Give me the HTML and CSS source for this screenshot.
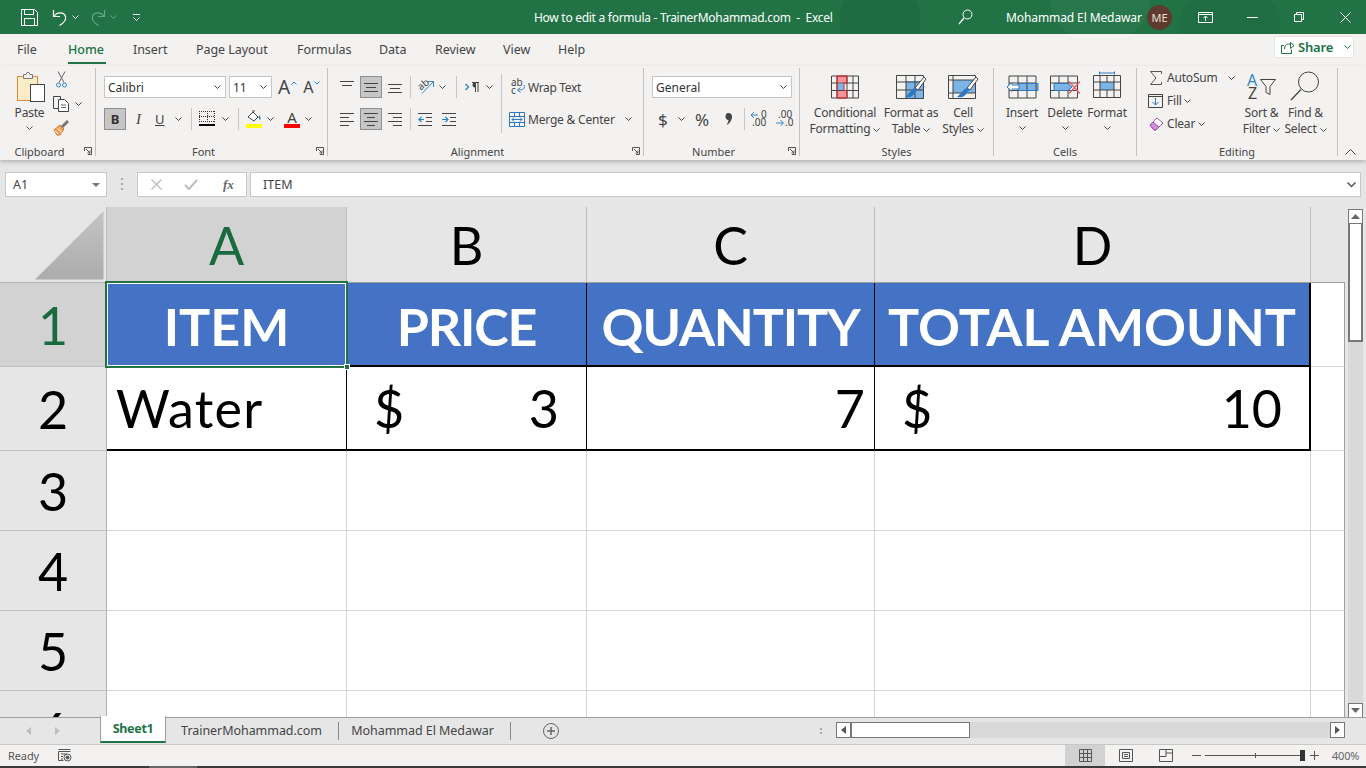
FILE: index.html
```html
<!DOCTYPE html>
<html lang="en">
<head>
<meta charset="utf-8">
<title>How to edit a formula - TrainerMohammad.com - Excel</title>
<link rel="stylesheet" href="styles.css">
</head>
<body>
<div class="app">
  <header class="titlebar">
    <svg class="m21" width="17" height="17" viewBox="0 0 17 17" fill="none" stroke="#fff"><path d="M.5.500h13l3 3v13H.5z"/><path d="M3.500.500v5h9v-5M3.500 16.500v-7h10v7"/></svg>
    <svg class="m13" width="17" height="17" viewBox="0 0 17 17" fill="none" stroke="#fff" stroke-width="1.200"><path d="M2.500 1v6.500H9"/><path d="M3 7.500C6 2.500 13 3 14.500 7.500 15.500 12 12 14.500 8.500 16.500"/></svg>
    <svg class="m4" width="7" height="4" viewBox="0 0 7 4" fill="none" stroke="#fff"><path d="M.5.500l3 3 3-3"/></svg>
    <svg class="m11" width="17" height="17" viewBox="0 0 17 17" fill="none" stroke="#6aa685" stroke-width="1.200"><path d="M14.500 1v6.500H8"/><path d="M14 7.500C11 2.500 4 3 2.500 7.500 1.500 12 5 14.500 8.500 16.500"/></svg>
    <svg class="m3" width="7" height="4" viewBox="0 0 7 4" fill="none" stroke="#6aa685"><path d="M.5.500l3 3 3-3"/></svg>
    <svg class="m16" width="7" height="7" viewBox="0 0 7 7" fill="none" stroke="#fff"><path d="M0 .5h7M.5 3.500l3 3 3-3"/></svg>
    <div class="doc-title">How to edit a formula - TrainerMohammad.com &nbsp;- &nbsp;Excel</div>
    <svg width="15" height="16" viewBox="0 0 15 16" fill="none" stroke="#fff"><circle cx="9.500" cy="5.500" r="4.500"/><path d="M6 9l-5 6" stroke-width="1.300"/></svg>
    <div class="user">Mohammad El Medawar</div>
    <div class="avatar">ME</div>
    <svg class="m26" width="15" height="11" viewBox="0 0 15 11" fill="none" stroke="#fff"><path d="M.5.500h14v10H.5zM.5 2.500h14M7.500 9V4.500M5.500 6l2-2 2 2"/></svg>
    <svg class="m34" width="11" height="1" viewBox="0 0 11 1"><rect width="11" height="1" fill="#fff"/></svg>
    <svg class="m36" width="10" height="10" viewBox="0 0 10 10" fill="none" stroke="#fff"><path d="M.5 2.500h7v7h-7zM2.500 2.500v-2h7v7h-2"/></svg>
    <svg class="m36" width="11" height="11" viewBox="0 0 11 11" fill="none" stroke="#fff"><path d="M.5.500l10 10M10.500.500l-10 10"/></svg>
  </header>

  <nav class="tabs">
    <span class="tab t-file">File</span>
    <span class="tab t-home active">Home</span>
    <span class="tab t-insert">Insert</span>
    <span class="tab t-page">Page Layout</span>
    <span class="tab t-formulas">Formulas</span>
    <span class="tab t-data">Data</span>
    <span class="tab t-review">Review</span>
    <span class="tab t-view">View</span>
    <span class="tab">Help</span>
    <div class="share">
      <svg width="14" height="13" viewBox="0 0 14 13" fill="none" stroke="#217346"><path d="M9.500 1.500l3.500 3-3.500 3zM9.500 3H7.500C5 3 3.500 5 3.500 8M10.500 8.500v4H.5V4.500H3"/></svg>
      <span class="share-t">Share</span>
      <svg class="m11" width="7" height="4" viewBox="0 0 7 4" fill="none" stroke="#217346"><path d="M.5.500l3 3 3-3"/></svg>
    </div>
  </nav>

  <section class="ribbon">
    <!-- Clipboard -->
    <div class="group g-clip">
      <div class="g-body clip-body">
        <div class="paste">
          <svg width="29" height="30" viewBox="0 0 29 30"><rect x=".5" y="4.500" width="20" height="24" fill="#fcecc8" stroke="#e0893a"/><path d="M6.500 4.500V2.500h2.500l1-2h2l1 2h2.500v4h-9z" fill="#f3f2f1" stroke="#777"/><rect x="13.500" y="12.500" width="14" height="17" fill="#fff" stroke="#444"/></svg>
          <span class="lbl paste-t">Paste</span>
          <svg class="caret-c" width="7" height="4" viewBox="0 0 7 4" fill="none" stroke="#555"><path d="M.5.500l3 3 3-3"/></svg>
        </div>
        <div class="clip-small">
          <svg class="cut" width="11" height="17" viewBox="0 0 11 17" fill="none"><path d="M2 .5l6 11M9 .5l-6 11" stroke="#666"/><circle cx="2.500" cy="14" r="2" stroke="#2e86c8"/><circle cx="8.500" cy="14" r="2" stroke="#2e86c8"/></svg>
          <div class="row copy">
            <svg width="17" height="16" viewBox="0 0 17 16" fill="#f3f2f1" stroke="#444"><path d="M.5.500h7v12h-7z"/><path d="M5.500 3.500h6l4 4v8h-10z" fill="#fff"/><path d="M8 9h5M8 11.500h5" stroke="#666"/></svg>
            <svg class="m5" width="7" height="4" viewBox="0 0 7 4" fill="none" stroke="#444"><path d="M.5.500l3 3 3-3"/></svg>
          </div>
          <svg class="brush" width="17" height="17" viewBox="0 0 17 17"><path d="M1 11l6-5 4 4-4 6H4z" fill="#f0a35a" stroke="#d9782a"/><path d="M8 7l6-6 2 2-6 6z" fill="#777"/><path d="M2 12l3 3M5 9.500l4 4" stroke="#fff"/></svg>
        </div>
      </div>
      <div class="g-foot"><span class="g-label">Clipboard</span><svg class="launch" width="8" height="8" viewBox="0 0 8 8" fill="none" stroke="#555"><path d="M.5 4V.5H7.500v7H4M2 2l4 4M6 3.500V6H3.500"/></svg></div>
    </div>

    <!-- Font -->
    <div class="group g-font">
      <div class="g-body stack">
        <div class="row r22">
          <div class="select w-font"><span>Calibri</span><svg width="7" height="4" viewBox="0 0 7 4" fill="none" stroke="#444"><path d="M.5.500l3 3 3-3"/></svg></div>
          <div class="select w-size m3"><span>11</span><svg width="7" height="4" viewBox="0 0 7 4" fill="none" stroke="#444"><path d="M.5.500l3 3 3-3"/></svg></div>
          <span class="glyph-a big m6">A</span><svg class="up" width="6" height="4" viewBox="0 0 6 4" fill="none" stroke="#2e86c8"><path d="M.5 3.500L3 1l2.500 2.500"/></svg>
          <span class="glyph-a small m6">A</span><svg class="up" width="6" height="4" viewBox="0 0 6 4" fill="none" stroke="#2e86c8"><path d="M.5.500L3 3 5.500.500"/></svg>
        </div>
        <div class="row r22">
          <div class="press bold-b">B</div>
          <span class="ital m10">I</span>
          <span class="under m13">U</span>
          <svg class="m10" width="7" height="4" viewBox="0 0 7 4" fill="none" stroke="#444"><path d="M.5.500l3 3 3-3"/></svg>
          <i class="sep m9"></i>
          <svg class="m7" width="16" height="17" viewBox="0 0 16 17" fill="none"><path d="M0 .5h16M0 10.500h16M.5 0v11M15.500 0v11M8.500 0v11M0 5.500h16" stroke="#333" stroke-dasharray="1 1"/><rect y="13" width="16" height="2" fill="#000"/></svg>
          <svg class="m7" width="7" height="4" viewBox="0 0 7 4" fill="none" stroke="#444"><path d="M.5.500l3 3 3-3"/></svg>
          <i class="sep m9"></i>
          <svg class="m7" width="16" height="18" viewBox="0 0 16 18" fill="none"><path d="M2 7l5-5 5 5-4 4z" stroke="#444" fill="#fff"/><path d="M6 1l3 0" stroke="#444"/><path d="M13 5c2 2 2 4 1 5-1-1-2-3-1-5z" fill="#2e78c0"/><rect y="14" width="16" height="4" fill="#ffff00"/></svg>
          <svg class="m5" width="7" height="4" viewBox="0 0 7 4" fill="none" stroke="#444"><path d="M.5.500l3 3 3-3"/></svg>
          <div class="colora m10"><span>A</span><i></i></div>
          <svg class="m5" width="7" height="4" viewBox="0 0 7 4" fill="none" stroke="#444"><path d="M.5.500l3 3 3-3"/></svg>
        </div>
      </div>
      <div class="g-foot"><span class="g-label">Font</span><svg class="launch" width="8" height="8" viewBox="0 0 8 8" fill="none" stroke="#555"><path d="M.5 4V.5H7.500v7H4M2 2l4 4M6 3.500V6H3.500"/></svg></div>
    </div>

    <!-- Alignment -->
    <div class="group g-align">
      <div class="g-body align-body">
        <div class="stack align-left">
          <div class="row r22">
            <svg class="m12" width="14" height="14" viewBox="0 0 14 14" stroke="#444"><path d="M0 1.500h14M2 5.500h10"/></svg>
            <div class="press m6"><svg width="14" height="14" viewBox="0 0 14 14" stroke="#444"><path d="M0 3.500h14M2 7.500h10M0 11.500h14"/></svg></div>
            <svg class="m6" width="14" height="14" viewBox="0 0 14 14" stroke="#444"><path d="M2 8.500h10M0 12.500h14M0 4.500h14"/></svg>
            <i class="sep m8"></i>
            <svg class="m7" width="17" height="16" viewBox="0 0 17 16" fill="none"><text x="0" y="10" class="svg-t" transform="rotate(-40 4 7)">ab</text><path d="M4 14.500L15 3M10 2.500h5.500V8" stroke="#2e86c8"/></svg>
            <svg class="m4" width="7" height="4" viewBox="0 0 7 4" fill="none" stroke="#444"><path d="M.5.500l3 3 3-3"/></svg>
            <i class="sep m10"></i>
            <svg class="m8" width="15" height="12" viewBox="0 0 15 12" fill="none"><path d="M.5 3l3 3-3 3" stroke="#2e86c8" stroke-width="1.300"/><path d="M7 1.500h7M10.500 1.500V11M13 1.500V11" stroke="#444"/><path d="M10 1.500a2.500 2.500 0 000 5z" fill="#444"/></svg>
            <svg class="m6" width="7" height="4" viewBox="0 0 7 4" fill="none" stroke="#444"><path d="M.5.500l3 3 3-3"/></svg>
          </div>
          <div class="row r22">
            <svg class="m12" width="14" height="14" viewBox="0 0 14 14" stroke="#444"><path d="M0 1.500h14M0 5.500h9M0 9.500h14M0 13.500h9"/></svg>
            <div class="press m6"><svg width="14" height="14" viewBox="0 0 14 14" stroke="#444"><path d="M0 1.500h14M3 5.500h8M0 9.500h14M3 13.500h8"/></svg></div>
            <svg class="m6" width="14" height="14" viewBox="0 0 14 14" stroke="#444"><path d="M0 1.500h14M5 5.500h9M0 9.500h14M5 13.500h9"/></svg>
            <i class="sep m8"></i>
            <svg class="m7" width="14" height="13" viewBox="0 0 14 13" fill="none"><path d="M0 .5h14M0 12.500h14M8 4.500h6M8 8.500h6" stroke="#444"/><path d="M6 6.500H1M3.500 4l-2.500 2.500L3.500 9" stroke="#2e86c8" stroke-width="1.200"/></svg>
            <svg class="m10" width="14" height="13" viewBox="0 0 14 13" fill="none"><path d="M0 .5h14M0 12.500h14M8 4.500h6M8 8.500h6" stroke="#444"/><path d="M0 6.500h5M3.500 4L6 6.500 3.500 9" stroke="#2e86c8" stroke-width="1.200"/></svg>
          </div>
        </div>
        <i class="sep-tall"></i>
        <div class="stack">
          <div class="row r22">
            <svg class="m9" width="14" height="16" viewBox="0 0 14 16" fill="none"><text x="0" y="7" class="svg-t">ab</text><text x="0" y="15" class="svg-t">c</text><path d="M13 6c1 4-1 5-6 5M9.500 8.500L6.500 11l3 2.500" stroke="#2e86c8"/></svg>
            <span class="lbl m3 low wrap-t">Wrap Text</span>
          </div>
          <div class="row r22">
            <svg class="m7" width="16" height="15" viewBox="0 0 16 15" fill="none"><path d="M.5.500h15v14H.5zM.5 4.500h15M.5 10.500h15M5.500.5v4M10.500.5v4M5.500 10.500v4M10.500 10.500v4" stroke="#2e78c0"/><path d="M3 7.500h10M5 5.500l-2 2 2 2M11 5.500l2 2-2 2" stroke="#2e78c0"/></svg>
            <span class="lbl m3 low">Merge &amp; Center</span>
            <svg class="m10" width="7" height="4" viewBox="0 0 7 4" fill="none" stroke="#444"><path d="M.5.500l3 3 3-3"/></svg>
          </div>
        </div>
      </div>
      <div class="g-foot"><span class="g-label">Alignment</span><svg class="launch" width="8" height="8" viewBox="0 0 8 8" fill="none" stroke="#555"><path d="M.5 4V.5H7.500v7H4M2 2l4 4M6 3.500V6H3.500"/></svg></div>
    </div>

    <!-- Number -->
    <div class="group g-num">
      <div class="g-body stack">
        <div class="row r22"><div class="select w-num m8"><span>General</span><svg width="7" height="4" viewBox="0 0 7 4" fill="none" stroke="#444"><path d="M.5.500l3 3 3-3"/></svg></div></div>
        <div class="row r22">
          <span class="num-g dollar">$</span>
          <svg class="m10" width="7" height="4" viewBox="0 0 7 4" fill="none" stroke="#444"><path d="M.5.500l3 3 3-3"/></svg>
          <span class="num-g pct m10">%</span>
          <svg class="m13" width="8" height="14" viewBox="0 0 8 14"><path d="M2.500 1C5.500.5 7.500 2.500 7 5.500 6.500 9 4.500 11.500 1.500 13 3 10.500 3.500 9 3.500 8 1.500 8 .5 6.500.5 4.500.5 2.500 1.500 1.500 2.500 1z" fill="#444"/></svg>
          <i class="sep m11"></i>
          <svg class="m6" width="18" height="16" viewBox="0 0 18 16" fill="none"><text x="10" y="7" class="svg-t">0</text><text x="1" y="15" class="svg-t">.00</text><path d="M0 4h7M3 1L0 4l3 3" stroke="#2e86c8"/></svg>
          <svg class="m7" width="18" height="16" viewBox="0 0 18 16" fill="none"><text x="2" y="7" class="svg-t">.00</text><text x="9" y="15" class="svg-t">.0</text><path d="M0 12h7M4.500 9l3 3-3 3" stroke="#2e86c8"/></svg>
        </div>
      </div>
      <div class="g-foot"><span class="g-label">Number</span><svg class="launch" width="8" height="8" viewBox="0 0 8 8" fill="none" stroke="#555"><path d="M.5 4V.5H7.500v7H4M2 2l4 4M6 3.500V6H3.500"/></svg></div>
    </div>

    <!-- Styles -->
    <div class="group g-styles">
      <div class="g-body big-row pad8">
        <div class="big w-cf">
          <svg width="28" height="23" viewBox="0 0 28 23" fill="none"><rect x="6" y="0" width="10" height="7" fill="#f6939b"/><rect x="6" y="15" width="10" height="8" fill="#f6939b"/><rect x="6" y="8" width="7" height="7" fill="#7db4e6"/><path d="M.5.500h27v22H.5zM.5 7.500h27M.5 15h27M6 .5v22M16 .5v22M22 .5v22" stroke="#444"/><path d="M6 .5h10v7H13v7.500h3v7.500H6z" stroke="#d8232a" stroke-width="1"/></svg>
          <span class="lbl">Conditional</span>
          <span class="lbl">Formatting<svg class="m3" width="7" height="4" viewBox="0 0 7 4" fill="none" stroke="#444"><path d="M.5.500l3 3 3-3"/></svg></span>
        </div>
        <div class="big w-ft">
          <svg width="30" height="24" viewBox="0 0 30 24" fill="none"><rect x="10" y="6" width="18" height="17" fill="#7db4e6"/><path d="M.5.500h27v23H.5zM.5 7h27M.5 15h27M10 .5v23M19 .5v23" stroke="#444"/><path d="M19 13L28 2l2 2-8 11z" fill="#fff" stroke="#444"/><path d="M9 22c5 1 9-1 10-5l3-2-3-2c-4 1-5 5-10 9z" fill="#2e78c0"/></svg>
          <span class="lbl">Format as</span>
          <span class="lbl">Table<svg class="m3" width="7" height="4" viewBox="0 0 7 4" fill="none" stroke="#444"><path d="M.5.500l3 3 3-3"/></svg></span>
        </div>
        <div class="big w-cs">
          <svg width="30" height="24" viewBox="0 0 30 24" fill="none"><rect x="5" y="5" width="23" height="13" fill="#7db4e6"/><path d="M.5.500h27v23H.5zM.5 5h27M.5 18h27M5 .5v23" stroke="#444"/><path d="M19 13L28 2l2 2-8 11z" fill="#fff" stroke="#444"/><path d="M9 22c5 1 9-1 10-5l3-2-3-2c-4 1-5 5-10 9z" fill="#2e78c0"/></svg>
          <span class="lbl">Cell</span>
          <span class="lbl">Styles<svg class="m3" width="7" height="4" viewBox="0 0 7 4" fill="none" stroke="#444"><path d="M.5.500l3 3 3-3"/></svg></span>
        </div>
      </div>
      <div class="g-foot plain"><span class="g-label">Styles</span></div>
    </div>

    <!-- Cells -->
    <div class="group g-cells">
      <div class="g-body big-row pad7">
        <div class="big w-ins">
          <svg width="33" height="23" viewBox="0 0 33 23" fill="none"><rect x="12" y="8" width="20" height="7" fill="#7db4e6"/><path d="M3 .5h27v22H3zM3 7.500h27M3 15h27M12 .5v22M21 .5v22" stroke="#444"/><path d="M12 8h20v7H12" stroke="#2e78c0"/><path d="M13 9.500H6V7l-5 4.500L6 16v-2.500h7z" fill="#fff" stroke="#2e78c0"/></svg>
          <span class="lbl">Insert</span>
          <svg class="caret-c" width="7" height="4" viewBox="0 0 7 4" fill="none" stroke="#444"><path d="M.5.500l3 3 3-3"/></svg>
        </div>
        <div class="big w-del">
          <svg width="31" height="23" viewBox="0 0 31 23" fill="none"><path d="M.5.500h27v22H.5zM.5 7.500h27M.5 15h27M9 .5v22M18 .5v22" stroke="#444"/><path d="M4 8h14l4 3.500-4 3.500H4z" fill="#7db4e6" stroke="#2e78c0"/><path d="M19 6l11 12M30 6L19 18" stroke="#ee5b5b" stroke-width="1.300"/></svg>
          <span class="lbl">Delete</span>
          <svg class="caret-c" width="7" height="4" viewBox="0 0 7 4" fill="none" stroke="#444"><path d="M.5.500l3 3 3-3"/></svg>
        </div>
        <div class="big w-fmt">
          <svg class="top-neg" width="28" height="27" viewBox="0 0 28 27" fill="none"><path d="M6.500.5v3M6.500 2h15M21.500.5v3" stroke="#2e78c0"/><rect x="7" y="11" width="14" height="8" fill="#7db4e6"/><path d="M.5 4.500h27v22H.5zM.5 11h27M.5 19h27M7 4.500v22M21 4.500v22M14 4.500v6.500M14 19v7.500" stroke="#444"/></svg>
          <span class="lbl">Format</span>
          <svg class="caret-c" width="7" height="4" viewBox="0 0 7 4" fill="none" stroke="#444"><path d="M.5.500l3 3 3-3"/></svg>
        </div>
      </div>
      <div class="g-foot plain"><span class="g-label">Cells</span></div>
    </div>

    <!-- Editing -->
    <div class="group g-edit">
      <div class="g-body big-row pad11">
        <div class="edit-left">
          <div class="row r23">
            <svg class="m2" width="12" height="14" viewBox="0 0 12 14" fill="none" stroke="#555"><path d="M11.500 3V.5H.5L6 7 .5 13.500h11V11"/></svg>
            <span class="lbl m5">AutoSum</span>
            <svg class="m10" width="7" height="4" viewBox="0 0 7 4" fill="none" stroke="#444"><path d="M.5.500l3 3 3-3"/></svg>
          </div>
          <div class="row r23">
            <svg width="15" height="14" viewBox="0 0 15 14" fill="none"><path d="M.5.500h14v13H.5zM.5 2.500h14" stroke="#444"/><path d="M7.500 4v7M4.500 8l3 3 3-3" stroke="#2e78c0"/></svg>
            <span class="lbl m4">Fill</span>
            <svg class="m2" width="7" height="4" viewBox="0 0 7 4" fill="none" stroke="#444"><path d="M.5.500l3 3 3-3"/></svg>
          </div>
          <div class="row r23">
            <svg class="m1" width="15" height="14" viewBox="0 0 15 14" fill="none"><path d="M1 8l7-7 6 5-7 7H5z" fill="#fff" stroke="#a84fb5"/><path d="M1 8l3-3 6 5-3 3H5z" fill="#cf8fd8" stroke="#a84fb5"/></svg>
            <span class="lbl m3">Clear</span>
            <svg class="m3" width="7" height="4" viewBox="0 0 7 4" fill="none" stroke="#444"><path d="M.5.500l3 3 3-3"/></svg>
          </div>
        </div>
        <div class="big w-sort">
          <svg width="30" height="27" viewBox="0 0 30 27" fill="none"><text x="0" y="11" class="svg-az blue">A</text><text x="1" y="24" class="svg-az">Z</text><path d="M13.500 4.500h15l-5.500 7v8l-4-2v-6z" stroke="#444"/></svg>
          <span class="lbl">Sort &amp;</span>
          <span class="lbl">Filter<svg class="m3" width="7" height="4" viewBox="0 0 7 4" fill="none" stroke="#444"><path d="M.5.500l3 3 3-3"/></svg></span>
        </div>
        <div class="big w-find">
          <svg class="top-neg" width="30" height="31" viewBox="0 0 30 31" fill="none"><circle cx="17.500" cy="11" r="10" stroke="#444"/><path d="M10 18.500L0 29" stroke="#444" stroke-width="1.300"/></svg>
          <span class="lbl">Find &amp;</span>
          <span class="lbl">Select<svg class="m3" width="7" height="4" viewBox="0 0 7 4" fill="none" stroke="#444"><path d="M.5.500l3 3 3-3"/></svg></span>
        </div>
      </div>
      <div class="g-foot plain"><span class="g-label">Editing</span></div>
    </div>
    <div class="collapse"><svg width="11" height="6" viewBox="0 0 11 6" fill="none" stroke="#444"><path d="M.5 5.500l5-5 5 5"/></svg></div>
  </section>

  <section class="formula">
    <div class="namebox"><span>A1</span><svg width="8" height="4" viewBox="0 0 8 4"><path d="M0 0h8L4 4z" fill="#777"/></svg></div>
    <div class="fdots"><i></i><i></i><i></i></div>
    <div class="fbtns">
      <svg width="11" height="11" viewBox="0 0 11 11" fill="none" stroke="#bdbdbd" stroke-width="1.400"><path d="M.5.500l10 10M10.500.500l-10 10"/></svg>
      <svg width="14" height="11" viewBox="0 0 14 11" fill="none" stroke="#bdbdbd" stroke-width="2"><path d="M1 6l4 4 8-9"/></svg>
      <span class="fx">fx</span>
    </div>
    <div class="finput"><span>ITEM</span><svg width="9" height="6" viewBox="0 0 9 6" fill="none" stroke="#555" stroke-width="1.500"><path d="M.5.500l4 4 4-4"/></svg></div>
  </section>

  <main class="main">
    <div class="sheet">
      <div class="corner"><svg width="107" height="76" viewBox="0 0 107 76"><defs><linearGradient id="tri" x1="0" y1="0" x2="0" y2="1"><stop offset="0" stop-color="#c4c4c4"/><stop offset="1" stop-color="#acacac"/></linearGradient></defs><path d="M35 72.500L103.500 4v68.500z" fill="url(#tri)"/></svg></div>
      <div class="ch sel">A</div><div class="ch">B</div><div class="ch">C</div><div class="ch">D</div><div class="ch ch-e"></div>

      <div class="rh sel">1</div>
      <div class="c hd">ITEM<div class="cursor"><i></i></div></div>
      <div class="c hd tight">PRICE</div>
      <div class="c hd tight">QUANTITY</div>
      <div class="c hd last">TOTAL AMOUNT</div>
      <div class="c edge"></div>

      <div class="rh">2</div>
      <div class="c dt txt">Water</div>
      <div class="c dt acc"><span>$</span><span>3</span></div>
      <div class="c dt qty">7</div>
      <div class="c dt acc last"><span>$</span><span>10</span></div>
      <div class="c edge"></div>

      <div class="rh">3</div><div class="c"></div><div class="c"></div><div class="c"></div><div class="c"></div><div class="c edge"></div>
      <div class="rh">4</div><div class="c"></div><div class="c"></div><div class="c"></div><div class="c"></div><div class="c edge"></div>
      <div class="rh">5</div><div class="c"></div><div class="c"></div><div class="c"></div><div class="c"></div><div class="c edge"></div>
      <div class="rh">6</div><div class="c"></div><div class="c"></div><div class="c"></div><div class="c"></div><div class="c edge"></div>
    </div>
    <div class="vscroll">
      <div class="sb-btn v"><svg width="9" height="5" viewBox="0 0 9 5"><path d="M0 5h9L4.500 0z" fill="#666"/></svg></div>
      <div class="v-thumb"></div>
      <div class="v-track"></div>
      <div class="sb-btn v"><svg width="9" height="5" viewBox="0 0 9 5"><path d="M0 0h9L4.500 5z" fill="#666"/></svg></div>
    </div>
  </main>

  <footer class="sheetbar">
    <svg class="m26" width="5" height="8" viewBox="0 0 5 8"><path d="M5 0v8L0 4z" fill="#bdbdbd"/></svg>
    <svg class="m24" width="5" height="8" viewBox="0 0 5 8"><path d="M0 0v8l5-4z" fill="#bdbdbd"/></svg>
    <div class="stab on">Sheet1</div>
    <div class="stab s2">TrainerMohammad.com</div>
    <i class="s-sep"></i>
    <div class="stab s3">Mohammad El Medawar</div>
    <i class="s-sep"></i>
    <svg class="m32" width="16" height="16" viewBox="0 0 16 16" fill="none" stroke="#666"><circle cx="8" cy="8" r="7.500"/><path d="M8 4v8M4 8h8" stroke-width="1.500"/></svg>
    <div class="hdots"><i></i><i></i></div>
    <div class="hscroll">
      <div class="sb-btn h"><svg width="5" height="8" viewBox="0 0 5 8"><path d="M5 0v8L0 4z" fill="#555"/></svg></div>
      <div class="h-thumb"></div>
      <div class="h-track"></div>
      <div class="sb-btn h"><svg width="5" height="8" viewBox="0 0 5 8"><path d="M0 0v8l5-4z" fill="#555"/></svg></div>
    </div>
  </footer>

  <footer class="status">
    <span class="ready">Ready</span>
    <svg class="m18" width="14" height="13" viewBox="0 0 14 13" fill="none" stroke="#555"><path d="M.5.500h12M.5 2.500h12M.5 2.500v9h5M3 5h6M3 7.500h2M3 10h2"/><circle cx="9.500" cy="8.500" r="3.500"/><circle cx="9.500" cy="8.500" r="1.500" fill="#555"/></svg>
    <div class="views">
      <div class="view on"><svg width="13" height="13" viewBox="0 0 13 13" fill="none" stroke="#555"><path d="M.5.500h12v12H.5zM4.500.5v12M8.500.5v12M.5 4.500h12M.5 8.500h12"/></svg></div>
      <div class="view view-2"><svg width="14" height="13" viewBox="0 0 14 13" fill="none" stroke="#555"><path d="M.5.500h13v12H.5zM3.500 3.500h7v6h-7zM5 5.500h4M5 7.500h4"/></svg></div>
      <div class="view"><svg width="14" height="13" viewBox="0 0 14 13" fill="none" stroke="#555"><path d="M.5.500h13v12H.5zM.5 7.500h6.500V.5M7 4h6.500"/></svg></div>
    </div>
    <div class="zoom">
      <i class="z-minus"></i>
      <div class="z-track"><i class="z-tick"></i><i class="z-thumb"></i></div>
      <svg class="m10" width="9" height="9" viewBox="0 0 9 9" stroke="#555"><path d="M0 4.500h9M4.500 0v9"/></svg>
      <span class="z-val">400%</span>
    </div>
  </footer>
  <div class="strip"><i></i></div>
</div>
</body>
</html>
```

FILE: styles.css
```css
* { box-sizing: border-box; }
html, body { margin: 0; padding: 0; }
body { font-family: "Noto Sans", "Open Sans", sans-serif; font-size: 12px; color: #444; background: #f3f2f1; }
svg { display: block; flex: none; overflow: visible; }
i { display: block; }

.m1 { margin-left: 1px; } .m2 { margin-left: 2px; } .m3 { margin-left: 3px; } .m4 { margin-left: 4px; }
.m5 { margin-left: 5px; } .m6 { margin-left: 6px; } .m7 { margin-left: 7px; } .m8 { margin-left: 8px; }
.m9 { margin-left: 9px; } .m10 { margin-left: 10px; } .m11 { margin-left: 11px; } .m12 { margin-left: 12px; }
.m13 { margin-left: 13px; } .m16 { margin-left: 16px; } .m18 { margin-left: 18px; } .m21 { margin-left: 21px; }
.m24 { margin-left: 24px; } .m26 { margin-left: 26px; } .m32 { margin-left: 32px; } .m34 { margin-left: 34px; } .m36 { margin-left: 36px; }
span svg { display: inline-block; vertical-align: middle; }

.app { width: 1366px; height: 768px; overflow: hidden; display: flex; flex-direction: column; }

/* title bar */
.titlebar {
  height: 34px; flex: none; display: flex; align-items: center; color: #fff; font-size: 12px;
  background:
    radial-gradient(circle at 880px 20px, rgba(0,0,0,.06) 0 40px, transparent 41px),
    radial-gradient(circle at 1230px 30px, rgba(0,0,0,.05) 0 50px, transparent 51px),
    radial-gradient(circle at 1100px -5px, rgba(255,255,255,.03) 0 50px, transparent 51px),
    #217346;
}
.doc-title { width: 424px; margin-left: 394px; white-space: nowrap; letter-spacing: -.28px; }
.user { margin-left: 33px; width: 141px; white-space: nowrap; letter-spacing: -.1px; }
.avatar { width: 25px; height: 25px; border-radius: 50%; background: #5f3a2f; color: #e8e0d8; font-size: 11px; line-height: 25px; text-align: center; }

/* tabs */
.tabs { height: 32px; flex: none; display: flex; align-items: center; padding-left: 17px; font-size: 12.500px; color: #444; letter-spacing: -.05px; }
.tab { display: block; line-height: 22px; height: 26px; margin-top: 3px; white-space: nowrap; }
.t-file { width: 51px; } .t-home { width: 65px; } .t-insert { width: 63px; } .t-page { width: 101px; }
.t-formulas { width: 82px; } .t-data { width: 56px; } .t-review { width: 68px; } .t-view { width: 55px; }
.tab.active { color: #217346; font-weight: 500; position: relative; }
.tab.active::after { content: ""; position: absolute; left: 0; top: 23px; width: 38px; height: 2px; background: #217346; }
.share { margin-left: auto; margin-right: 12px; width: 80px; height: 22px; margin-top: -6px; background: #fff; border: 1px solid #e6e5e4; border-radius: 2px; display: flex; align-items: center; padding-left: 6px; color: #217346; font-weight: 600; font-size: 13px; }
.share-t { margin-left: 3px; width: 35px; letter-spacing: -.2px; }

/* ribbon */
.ribbon { height: 94px; flex: none; display: flex; padding-top: 2px; background: #f3f2f1; position: relative; box-shadow: 0 2px 4px rgba(0,0,0,.22); z-index: 2; }
.group { height: 88px; border-right: 1px solid #c4c3c2; display: flex; flex-direction: column; flex: none; }
.g-clip { width: 96px; } .g-font { width: 232px; } .g-align { width: 316px; } .g-num { width: 156px; }
.g-styles { width: 194px; } .g-cells { width: 143px; } .g-edit { width: 201px; }
.g-body { height: 76px; flex: none; }
.g-foot { height: 12px; flex: none; display: flex; align-items: center; font-size: 11px; color: #444; }
.g-label { flex: 1; text-align: center; line-height: 12px; white-space: nowrap; margin-top: 3px; }
.launch { margin: 2px 3px 0 5px; }
.lbl { font-size: 12px; line-height: 16px; color: #444; white-space: nowrap; letter-spacing: -.2px; }
.low { position: relative; top: 1px; }
.wrap-t { letter-spacing: -.35px; }
.row { display: flex; align-items: center; }
.r22 { height: 22px; }
.r23 { height: 23px; }
.stack { display: flex; flex-direction: column; gap: 10px; padding-top: 8px; }
.sep { width: 1px; height: 22px; background: #c8c7c6; }
.press { width: 22px; height: 22px; background: #c6c6c6; border: 1px solid #8f8f8f; display: flex; align-items: center; justify-content: center; }

/* clipboard */
.clip-body { display: flex; }
.paste { margin-left: 10px; width: 39px; display: flex; flex-direction: column; align-items: center; padding-top: 4px; }
.paste svg:first-child { margin-left: 3px; }
.paste-t { margin-top: 3px; }
.caret-c { margin-top: 5px; }
.clip-small { margin-left: 4px; padding-top: 3px; display: flex; flex-direction: column; }
.cut { margin-left: 3px; }
.copy { margin-top: 8px; }
.brush { margin-top: 7px; }

/* font */
.select { height: 22px; background: #fff; border: 1px solid #c6c6c6; display: flex; align-items: center; justify-content: space-between; padding: 0 4px 0 3px; color: #333; font-size: 12px; }
.g-font .stack { padding-left: 8px; }
.w-font { width: 122px; } .w-size { width: 43px; } .w-num { width: 140px; }
.glyph-a { color: #444; line-height: 22px; }
.glyph-a.big { font-size: 19px; }
.glyph-a.small { font-size: 16px; }
.g-font .up { margin: -8px 0 0 1px; }
.bold-b { font-weight: 700; font-size: 13px; color: #333; }
.ital { font-style: italic; font-family: "Liberation Serif", serif; font-size: 15px; color: #444; width: 6px; }
.under { text-decoration: underline; font-size: 13px; color: #444; width: 10px; }
.colora { width: 16px; height: 18px; position: relative; text-align: center; font-size: 15px; line-height: 14px; color: #444; }
.colora i { position: absolute; left: 0; bottom: 0; width: 16px; height: 4px; background: #f00; }
.svg-t { font: 10px "Noto Sans", sans-serif; fill: #444; stroke: none; }
.svg-az { font: 16px "Noto Sans", sans-serif; fill: #444; stroke: none; }
.svg-az.blue { fill: #2e86c8; }

/* alignment */
.align-body { display: flex; }
.align-left { width: 173px; flex: none; }
.sep-tall { width: 1px; height: 59px; margin-top: 6px; background: #c8c7c6; flex: none; }

/* number */
.num-g { color: #444; }
.dollar { font-size: 17px; margin-left: 14px; width: 10px; }
.pct { font-size: 17px; width: 17px; letter-spacing: -.5px; }

/* big buttons */
.big-row { display: flex; padding-top: 7px; }
.pad8 { padding-left: 8px; } .pad7 { padding-left: 7px; } .pad11 { padding-left: 11px; }
.big { display: flex; flex-direction: column; align-items: center; flex: none; }
.big > svg:first-child { height: 24px; margin-bottom: 6px; }
.big > svg.top-neg { height: auto; margin-top: -4px; margin-bottom: 3px; }
.w-fmt > svg.top-neg { margin-bottom: 7px; }
.w-cf { width: 74px; } .w-ft { width: 58px; } .w-cs { width: 46px; }
.w-ins { width: 42px; } .w-del { width: 44px; } .w-fmt { width: 40px; }
.w-sort { width: 43px; } .w-find { width: 45px; }
.edit-left { width: 92px; display: flex; flex-direction: column; margin-top: -9px; }
.w-sort > svg:first-child { height: 27px; margin-bottom: 3px; }
.collapse { flex: 1; display: flex; align-items: flex-end; justify-content: flex-start; padding: 0 0 1px 7px; height: 88px; }

/* formula bar */
.formula { height: 47px; flex: none; background: #e6e6e6; display: flex; padding: 12px 5px 11px 5px; color: #444; font-size: 12.500px; }
.namebox { width: 102px; height: 25px; background: #fff; border: 1px solid #c8c8c8; display: flex; align-items: center; justify-content: space-between; padding: 0 6px 0 7px; }
.fdots { width: 30px; display: flex; flex-direction: column; align-items: center; justify-content: center; gap: 3px; }
.fdots i { width: 2px; height: 2px; background: #aaa; }
.fbtns { width: 110px; height: 25px; background: #fff; border: 1px solid #c8c8c8; display: flex; align-items: center; padding-left: 13px; gap: 22px; }
.fx { font-family: "Liberation Serif", serif; font-style: italic; font-weight: 700; font-size: 13px; color: #666; margin-left: 3px; }
.finput { margin-left: 3px; width: 1111px; height: 25px; background: #fff; border: 1px solid #c8c8c8; display: flex; align-items: center; justify-content: space-between; padding: 0 4px 0 12px; }

/* sheet */
.main { height: 510px; flex: none; display: flex; background: #e6e6e6; overflow: hidden; }
.sheet { width: 1345px; height: 510px; display: grid; grid-template-columns: 107px 240px 240px 288px 436px 34px; grid-template-rows: 76px 84px 84px 80px 80px 80px 80px; font-family: Lato, "Liberation Sans", sans-serif; font-size: 52px; color: #000; overflow: hidden; }
.corner { background: #e6e6e6; border-right: 1px solid #bdbdbd; border-bottom: 1px solid #b4b4b4; }
.ch { background: #e6e6e6; border-right: 1px solid #bdbdbd; border-bottom: 1px solid #9f9f9f; display: flex; align-items: center; justify-content: center; }
.ch-e { border-right: 0; }
.ch.sel { background: #d2d2d2; color: #1a6a3f; }
.rh { background: #e6e6e6; border-right: 1px solid #b4b4b4; border-bottom: 1px solid #c0c0c0; display: flex; align-items: center; justify-content: center; }
.rh.sel { background: #d2d2d2; color: #1a6a3f; }
.c { background: #fff; border-right: 1px solid #d4d4d4; border-bottom: 1px solid #d4d4d4; position: relative; }
.c.edge { border-right: 1px solid #9f9f9f; }
.hd { background: #4472c4; color: #fff; font-weight: 700; display: flex; align-items: center; justify-content: center; border-right: 1px solid #000; border-bottom: 2px solid #000; white-space: nowrap; padding-top: 3px; }
.tight { letter-spacing: -1.200px; }
.dt { display: flex; align-items: center; border-right: 1px solid #000; border-bottom: 2px solid #000; white-space: nowrap; }
.c.last { border-right-width: 2px; }
.txt { padding-left: 9px; letter-spacing: 1.200px; }
.acc { justify-content: space-between; padding: 0 27px 0 27px; }
.qty { justify-content: flex-end; padding-right: 9px; }
.cursor { position: absolute; left: -2px; top: -2px; right: -2px; bottom: -3px; border: 2px solid #217346; box-shadow: inset 0 0 0 1px #fff; z-index: 3; }
.cursor i { position: absolute; right: -4px; bottom: -4px; width: 6px; height: 6px; background: #217346; border: 1px solid #fff; }

/* scrollbars */
.vscroll { width: 21px; padding: 2px 3px 0; display: flex; flex-direction: column; background: #e6e6e6; }
.sb-btn { background: #fff; border: 1px solid #777; display: flex; align-items: center; justify-content: center; flex: none; }
.sb-btn.v { height: 15px; width: 15px; }
.v-thumb { height: 119px; flex: none; background: #fff; border: 2px solid #777; border-top-width: 1px; margin-top: -1px; }
.v-track { height: 361px; flex: none; background: #d9d9d9; }
.sheetbar { height: 28px; flex: none; background: #e6e6e6; border-top: 1px solid #9f9f9f; border-bottom: 1px solid #c8c8c8; display: flex; align-items: center; font-size: 12.500px; position: relative; z-index: 1; }
.stab { height: 26px; margin-top: -1px; display: flex; align-items: center; justify-content: center; color: #444; white-space: nowrap; }
.stab.on { margin-left: 40px; margin-top: -3px; height: 27px; width: 66px; background: #fff; color: #217346; font-weight: 700; border-bottom: 2px solid #217346; border-left: 1px solid #9f9f9f; border-right: 1px solid #9f9f9f; letter-spacing: -.3px; }
.s2 { margin-left: 15px; width: 141px; letter-spacing: -.05px; }
.s3 { margin-left: 11px; width: 145px; letter-spacing: -.05px; }
.s-sep { width: 1px; height: 18px; background: #888; }
.s2 + .s-sep { margin-left: 16px; }
.s3 + .s-sep { margin-left: 15px; }
.hdots { margin-left: 261px; display: flex; flex-direction: column; gap: 2px; width: 16px; }
.hdots i { width: 2px; height: 2px; background: #aaa; }
.hscroll { width: 509px; height: 16px; display: flex; margin-top: -2px; }
.sb-btn.h { width: 15px; height: 16px; }
.h-thumb { width: 120px; height: 16px; background: #fff; border: 1px solid #777; border-left-width: 2px; margin-left: -1px; flex: none; }
.h-track { flex: 1; background: #d9d9d9; }

/* status */
.status { height: 21px; flex: none; background: #f3f2f1; display: flex; align-items: center; padding-left: 8px; font-size: 11px; color: #555; }
.ready { width: 32px; letter-spacing: -.1px; }
.views { margin-left: 993px; display: flex; height: 21px; }
.view { width: 40px; height: 21px; display: flex; align-items: center; justify-content: center; }
.view-2 { width: 41px; padding-left: 1px; }
.view.on { background: #d2d2d2; }
.zoom { display: flex; align-items: center; margin-left: 6px; }
.z-minus { width: 9px; height: 1px; background: #555; }
.z-track { width: 95px; height: 1px; background: #555; margin-left: 4px; position: relative; }
.z-tick { position: absolute; left: 50px; top: -2px; width: 1px; height: 5px; background: #555; }
.z-thumb { position: absolute; right: -5px; top: -5px; width: 5px; height: 11px; background: #333; }
.z-val { margin-left: 13px; color: #666; letter-spacing: -.2px; }
.strip { height: 2px; flex: none; background: #3a3a3a; }
.strip i { width: 48px; height: 2px; margin-left: 149px; background: #666; }
```
